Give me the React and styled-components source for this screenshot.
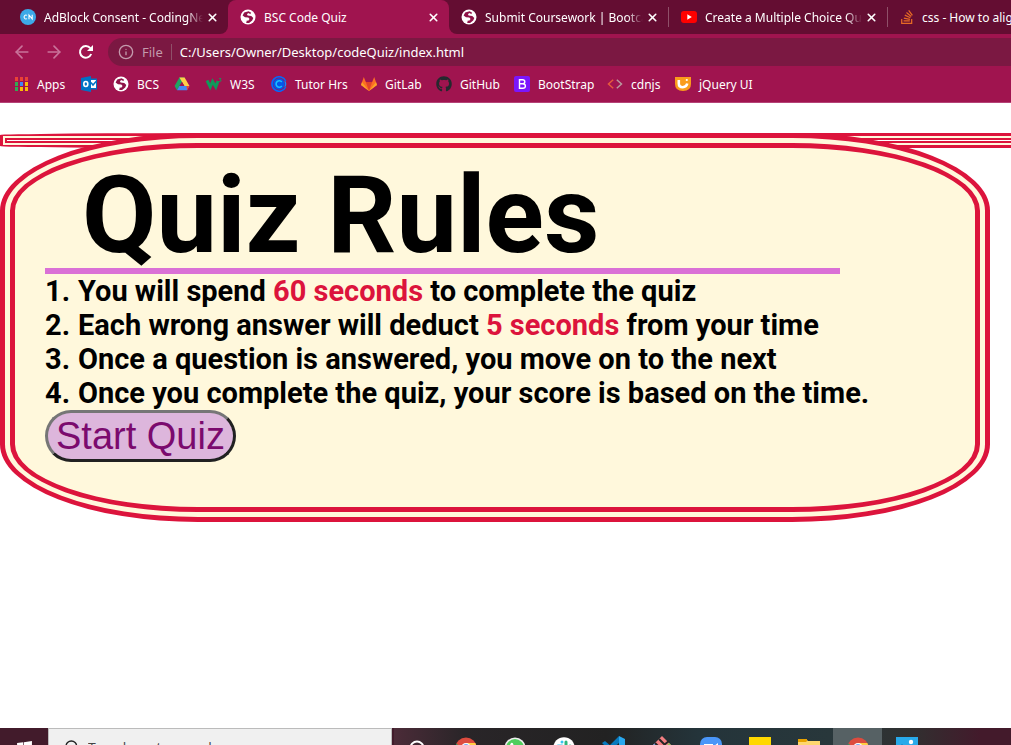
import React from "react";
import styled, { createGlobalStyle } from "styled-components";
import { X, ArrowLeft, ArrowRight, Info, Search } from "lucide-react";
import { FaGithub, FaWindows } from "react-icons/fa";
import { SiStackoverflow } from "react-icons/si";

const Global = createGlobalStyle`
  *, *::before, *::after { box-sizing: border-box; }
  html, body, #root { margin: 0; min-height: 100vh; }
  body { background: #fff; overflow: hidden; font-family: "Open Sans", "Noto Sans", sans-serif; }
`;

const Screen = styled.div`
  min-height: 100vh;
  display: flex;
  flex-direction: column;
  overflow: hidden;
`;

const Browser = styled.header`
  background: #a0144f;
  color: #fff;
  font-family: "Noto Sans", sans-serif;
  font-size: 12px;
  border-bottom: 1px solid #b54377;
  overflow: hidden;
`;

const TabStrip = styled.nav`
  display: flex;
  height: 34px;
  background: #640d32;
`;

const TabBack = styled.div`
  flex: none;
  background: ${(p) => (p.$active ? "#640d32" : "#a0144f")};
`;

const Tab = styled.div`
  width: ${(p) => p.$width}px;
  height: 34px;
  display: flex;
  align-items: center;
  padding: 0 9px 0 ${(p) => (p.$first ? 20 : 12)}px;
  background: ${(p) => (p.$active ? "#a0144f" : "#640d32")};
  border-radius: ${(p) => p.$radius || "0"};
`;

const TabLink = styled.a`
  flex: 1;
  min-width: 0;
  display: flex;
  align-items: center;
  gap: 8px;
  color: #fff;
  text-decoration: none;
`;

const TabTitle = styled.span`
  flex: 1;
  min-width: 0;
  margin-right: 2px;
  white-space: nowrap;
  overflow: hidden;
  mask-image: ${(p) => (p.$fade ? "linear-gradient(to left, transparent, #000 16px)" : "none")};
`;

const IconButton = styled.button`
  display: flex;
  align-items: center;
  justify-content: center;
  width: ${(p) => p.$size}px;
  height: ${(p) => p.$size}px;
  flex: none;
  padding: 0;
  border: 0;
  background: none;
  color: ${(p) => (p.$dim ? "#c9739a" : "#fff")};
`;

const Divider = styled.span`
  flex: none;
  align-self: center;
  width: 1px;
  height: ${(p) => p.$height}px;
  background: #8f5069;
`;

const AddressRow = styled.div`
  display: flex;
  align-items: center;
  gap: 12px;
  height: 36px;
  padding-left: 12px;
`;

const AddressBar = styled.div`
  flex: 1;
  display: flex;
  align-items: center;
  gap: 8px;
  height: 28px;
  padding-left: 10px;
  border-radius: 14px 0 0 14px;
  background: #7b1842;
  color: #c39aac;
  font-size: 13px;
`;

const AddressInput = styled.input`
  flex: 1;
  min-width: 0;
  padding: 0;
  border: 0;
  outline: 0;
  background: none;
  color: #fff;
  font: 13px "Noto Sans", sans-serif;
`;

const Bookmarks = styled.nav`
  display: flex;
  align-items: center;
  height: 32px;
  padding: 0 0 4px 13px;
`;

const Bookmark = styled.a`
  flex: 0 0 ${(p) => p.$width}px;
  display: flex;
  align-items: center;
  gap: 8px;
  color: #fff;
  text-decoration: none;
  white-space: nowrap;
`;

const Page = styled.main`
  position: relative;
  flex: 1;
  padding-top: 30px;
  overflow: hidden;
`;

const Rule = styled.hr`
  width: 120%;
  height: 15px;
  margin: 0 0 -15px;
  padding: 2px;
  border: 3px solid crimson;
  border-radius: 20% / 2px;
  background: cornsilk;

  &::before {
    content: "";
    display: block;
    height: 5px;
    border: 2px solid crimson;
    background: #fff;
  }
`;

const RulesCard = styled.section`
  position: relative;
  width: calc(100% - 21px);
  border: 15px double crimson;
  border-radius: 20%;
  background: cornsilk;
  padding: 14px 30px 45px;
`;

const Title = styled.h1`
  width: calc(100% - 105px);
  margin: 0;
  padding-left: 37px;
  border-bottom: 6px solid orchid;
  font: bold 108px/106px Roboto, "Liberation Sans", sans-serif;
  white-space: nowrap;
  color: #000;
`;

const RuleList = styled.ol`
  margin: 0;
  padding: 0;
  list-style: none;
  font: bold 29px/34px Roboto, "Liberation Sans", sans-serif;
  white-space: nowrap;
  color: #000;
`;

const RuleItem = styled.li`
  display: flex;
`;

const RuleNumber = styled.span`
  flex: 0 0 33px;
`;

const Highlight = styled.span`
  color: crimson;
`;

const StartButton = styled.button`
  display: block;
  height: 52px;
  padding: 0 8px;
  border: 3px solid;
  border-color: #767676 #212121 #212121 #767676;
  border-radius: 26px;
  background: #ddb6dc;
  color: #7b0a6e;
  font: 38px/44px "Liberation Sans", sans-serif;
`;

const Taskbar = styled.footer`
  display: flex;
  height: 17px;
  overflow: hidden;
  background: linear-gradient(90deg, #421b2b 0, #421b2b 39%, #4b2b38 39%, #292528 46%, #222 60%, #24343a 69%, #28373b 82%, #303030 90%, #431a2b 97%);
`;

const StartMenu = styled.button`
  flex: none;
  width: 48px;
  height: 40px;
  padding: 4px 0 0;
  border: 0;
  background: none;
  color: #fff;
`;

const TaskSearch = styled.label`
  flex: none;
  display: flex;
  align-items: center;
  gap: 8px;
  width: 344px;
  height: 38px;
  padding-left: 15px;
  border: 1px solid #bbb;
  background: #f0f0f0;
  color: #222;
`;

const TaskInput = styled.input`
  width: 280px;
  padding: 0;
  border: 0;
  background: none;
  font: 14px "Open Sans", sans-serif;
  &::placeholder { color: #444; opacity: 1; }
`;

const TaskButton = styled.button`
  flex: none;
  width: 49px;
  height: 40px;
  display: flex;
  align-items: center;
  justify-content: center;
  padding: 0;
  border: 0;
  background: ${(p) => (p.$active ? "#566164" : "none")};
`;

const Globe = () => (
  <svg width="16" height="16" viewBox="0 0 16 16" aria-hidden="true">
    <circle cx="8" cy="8" r="7.5" fill="#fff" />
    <path d="M8.6 2.2 4.2 3.6 2.6 6.4 5 8.2 8.3 8.4 9.6 10.1 8.2 11.8 6.8 11.4 6.2 14l2.9.1 3.1-2.5 1.1-2.5-2-2.2-3.7-.5-.7-1.5 2-.8 1.2 1.1 1.1-1.4z" fill="#8f1348" />
  </svg>
);
const CodingNepal = () => (
  <svg width="16" height="16" viewBox="0 0 16 16" aria-hidden="true">
    <circle cx="8" cy="8" r="8" fill="#3da9e8" />
    <path d="M7 6.4A1.9 1.9 0 1 0 7 9.6M9 10.2V6l3.2 4V5.8" fill="none" stroke="#fff" strokeWidth="1.1" />
  </svg>
);
const YouTube = () => (
  <svg width="16" height="16" viewBox="0 0 16 16" aria-hidden="true">
    <rect y="2" width="16" height="12" rx="3" fill="#f00" />
    <path d="m6.3 5.3 4.5 2.7-4.5 2.7z" fill="#fff" />
  </svg>
);
const Reload = () => (
  <svg width="16" height="16" viewBox="0 0 16 16" aria-hidden="true">
    <path d="M13.2 10A5.8 5.8 0 1 1 12.3 4.2" fill="none" stroke="#fff" strokeWidth="2" />
    <path d="M15 1v6H9z" fill="#fff" />
  </svg>
);
const appColors = ["#ea4335", "#ea4335", "#ea4335", "#34a853", "#4285f4", "#fbbc05", "#34a853", "#fbbc05", "#fbbc05"];
const AppsIcon = () => (
  <svg width="16" height="16" viewBox="0 0 16 16" aria-hidden="true">
    {appColors.map((c, i) => (
      <rect key={i} x={2 + (i % 3) * 5} y={1 + Math.floor(i / 3) * 5} width="3" height="4" fill={c} />
    ))}
  </svg>
);
const Outlook = () => (
  <svg width="16" height="16" viewBox="0 0 16 16" aria-hidden="true">
    <path d="M10 2.5h6v11h-6z" fill="#0072c6" />
    <path d="M10 4h5v8h-5z" fill="#fff" />
    <path d="m10 6.5 2 2.5 3.5-4" stroke="#0072c6" strokeWidth="1.5" fill="none" />
    <path d="M0 2 10 0v16L0 14z" fill="#0072c6" />
    <ellipse cx="4.8" cy="8" rx="2" ry="2.5" stroke="#fff" strokeWidth="1.6" fill="none" />
  </svg>
);
const Drive = () => (
  <svg width="16" height="16" viewBox="0 0 16 16" aria-hidden="true">
    <path d="M5.4 1.5h5.2L5.5 10 3 14.2.6 10z" fill="#1fa463" />
    <path d="M5.4 1.5h5.2L15.5 10h-5.1z" fill="#ffcf48" />
    <path d="M5.4 10h10L13 14.2H3z" fill="#4688f4" />
    <path d="M8 6 10.4 10H5.5z" fill="#a0144f" />
    <path d="M12.5 10h3L13 14.2z" fill="#ea4335" />
  </svg>
);
const W3 = () => (
  <svg width="16" height="16" viewBox="0 0 16 16" aria-hidden="true">
    <path d="M1 4.5 4.2 11l2.4-5.5L9.8 11l2.2-6" fill="none" stroke="#0f9a5a" strokeWidth="3" />
    <path d="M13 2.5h2l-1 1.2q1.5 0 1 1.3-.4.8-2 .4" fill="none" stroke="#0f9a5a" strokeWidth=".8" />
  </svg>
);
const Calendly = () => (
  <svg width="16" height="16" viewBox="0 0 16 16" aria-hidden="true">
    <path d="M14.7 5A7.2 7.2 0 1 0 14.7 11" fill="none" stroke="#006bff" strokeWidth="1.6" />
    <circle cx="8" cy="8" r="5.8" fill="#0754e8" />
    <path d="M10.8 6A3.2 3.2 0 1 0 10.8 10" fill="none" stroke="#19bfff" strokeWidth="1.6" />
    <path d="M13.8 5.2q1.8 2.8 0 5.6" fill="none" stroke="#168dff" strokeWidth="1.2" />
  </svg>
);
const GitLab = () => (
  <svg width="16" height="16" viewBox="0 0 16 16" aria-hidden="true">
    <path d="M8 15 0 9l2.8-8 2 5h6.4l2-5L16 9z" fill="#fc6d26" />
    <path d="m8 15 3.2-9H4.8z" fill="#e24329" />
    <path d="M8 15 0 9l1-3zM8 15l8-6-1-3z" fill="#fca326" />
  </svg>
);
const Bootstrap = () => (
  <svg width="16" height="16" viewBox="0 0 16 16" aria-hidden="true">
    <rect width="16" height="16" rx="2" fill="#7b16fb" />
    <path d="M5.5 3.7h3q2.3 0 2.3 2T8.5 7.8h-3zm0 4.1h3.2q2.7 0 2.7 2.2t-2.7 2.2H5.5z" fill="none" stroke="#fff" strokeWidth="1.4" />
  </svg>
);
const Cdn = () => (
  <svg width="16" height="16" viewBox="0 0 16 16" aria-hidden="true">
    <path d="M6.2 3.7 1.5 8l4.7 4.3" fill="none" stroke="#e65b3d" strokeWidth="1.5" />
    <path d="M9.8 3.7 14.5 8l-4.7 4.3" fill="none" stroke="#b99a9f" strokeWidth="1.5" />
  </svg>
);
const JQuery = () => (
  <svg width="16" height="16" viewBox="0 0 16 16" aria-hidden="true">
    <path d="M0 1h16v7q0 7-8 7T0 8z" fill="#fa9c1b" />
    <path d="M3.8 4v3.5q0 3.7 4 3.7 3.5 0 4.5-3.7" fill="none" stroke="#fff" strokeWidth="2.6" />
    <circle cx="11.8" cy="4" r="1.1" fill="#fff" />
  </svg>
);
const Chrome = () => (
  <svg width="22" height="22" viewBox="0 0 22 22" aria-hidden="true">
    <circle cx="11" cy="11" r="10.5" fill="#dd4b3e" />
    <path d="M1.5 6.5A10.5 10.5 0 0 0 11 21.5L7 12z" fill="#1aa260" />
    <path d="M11 6h9.3A10.5 10.5 0 0 1 11 21.5z" fill="#ffce44" />
    <circle cx="11" cy="11" r="5" fill="#fff" />
    <circle cx="11" cy="11" r="3.8" fill="#4587f3" />
  </svg>
);
const Cortana = () => (
  <svg width="20" height="20" viewBox="0 0 20 20" aria-hidden="true">
    <circle cx="10" cy="10" r="6.5" fill="none" stroke="#fff" strokeWidth="2" />
  </svg>
);
const WhatsApp = () => (
  <svg width="22" height="22" viewBox="0 0 22 22" aria-hidden="true">
    <circle cx="11" cy="11" r="10.5" fill="#eee" />
    <circle cx="11" cy="11" r="9" fill="#4fce5d" />
    <path d="M7 6q2-1 2.5 2L9 10q2 3 4 3l1.5-1 2 1.5q-1 3-4 2Q6 13 6 8z" fill="#fff" />
  </svg>
);
const Slack = () => (
  <svg width="22" height="22" viewBox="0 0 22 22" aria-hidden="true">
    <circle cx="11" cy="11" r="10.8" fill="#fff" />
    <g fill="none" strokeWidth="3" strokeLinecap="round">
      <path d="M9 5v.1M5 9h4" stroke="#36c5f0" />
      <path d="M13 5v4M17 9h.1" stroke="#2eb67d" />
      <path d="M13 13h4M13 17v.1" stroke="#ecb22e" />
      <path d="M9 13v4M5 13h.1" stroke="#e01e5a" />
    </g>
  </svg>
);
const VSCode = () => (
  <svg width="24" height="24" viewBox="0 0 24 24" aria-hidden="true">
    <path d="m18 0 6 3v18l-6 3z" fill="#29a8ee" />
    <path d="M18 0v7L4 19l-3-2zM18 24v-7L4 5 1 7z" fill="#0879bd" />
  </svg>
);
const GitBash = () => (
  <svg width="24" height="24" viewBox="0 0 24 24" aria-hidden="true">
    <path d="m12 0 12 12-12 12L0 12z" fill="#f27f82" />
    <path d="m0 12 5-5 6 6-6 5z" fill="#76a8e9" />
    <path d="m19 7 5 5-5 5-4-5z" fill="#8bc75b" />
    <path d="m9 3 9 9M5 7l9 9M14 9l5-4" stroke="#252525" strokeWidth="2" />
  </svg>
);
const Zoom = () => (
  <svg width="24" height="24" viewBox="0 0 24 24" aria-hidden="true">
    <rect x="1" y="1" width="22" height="22" rx="7" fill="#4a96f8" />
    <path d="M5 8h9v7H7q-2 0-2-2zm10 2 4-3v7l-4-3z" fill="#fff" />
  </svg>
);
const Notes = () => (
  <svg width="22" height="22" viewBox="0 0 22 22" aria-hidden="true">
    <path d="M0 0h22v15l-7 7H0z" fill="#ffd800" />
  </svg>
);
const Folder = () => (
  <svg width="22" height="20" viewBox="0 0 22 20" aria-hidden="true">
    <path d="M0 1h8l2 2h12v17H0z" fill="#ffd66e" />
    <path d="M0 1h9v2l-1 1H0z" fill="#e8a200" />
  </svg>
);
const Photos = () => (
  <svg width="22" height="22" viewBox="0 0 22 22" aria-hidden="true">
    <path d="M0 0h22v22H0z" fill="#28aaea" />
    <circle cx="15" cy="5" r="2.2" fill="#fff" />
    <path d="m0 13 6-6 5 5v10H0z" fill="#1279b8" />
  </svg>
);

const tabs = [
  { title: "AdBlock Consent - CodingNepal", icon: <CodingNepal />, width: 228, radius: "0 0 8px 0", fade: true, first: true },
  { title: "BSC Code Quiz", icon: <Globe />, width: 221, active: true, radius: "8px 8px 0 0" },
  { title: "Submit Coursework | Bootcamp", icon: <Globe />, width: 219, radius: "0 0 0 8px", fade: true, divider: true },
  { title: "Create a Multiple Choice Quiz App", icon: <YouTube />, width: 218, fade: true, divider: true },
  { title: "css - How to align a button", icon: <SiStackoverflow size={14} color="#e66a25" />, width: 230 },
];

const bookmarks = [
  ["Apps", <AppsIcon />, 68],
  ["", <Outlook />, 32, "Outlook"],
  ["BCS", <Globe />, 61],
  ["", <Drive />, 32, "Drive"],
  ["W3S", <W3 />, 65],
  ["Tutor Hrs", <Calendly />, 90],
  ["GitLab", <GitLab />, 75],
  ["GitHub", <FaGithub size={16} color="#24292e" />, 78],
  ["BootStrap", <Bootstrap />, 93],
  ["cdnjs", <Cdn />, 68],
  ["jQuery UI", <JQuery />, 90],
];

const rules = [
  <>You will spend <Highlight>60 seconds</Highlight> to complete the quiz</>,
  <>Each wrong answer will deduct <Highlight>5 seconds</Highlight> from your time</>,
  <>Once a question is answered, you move on to the next</>,
  <>Once you complete the quiz, your score is based on the time.</>,
];

const tasks = [
  ["Cortana", <Cortana />],
  ["Chrome", <Chrome />],
  ["WhatsApp", <WhatsApp />],
  ["Slack", <Slack />],
  ["Code editor", <VSCode />],
  ["Git", <GitBash />],
  ["Zoom", <Zoom />],
  ["Notes", <Notes />],
  ["Files", <Folder />],
  ["Chrome window", <Chrome />, true],
  ["Photos", <Photos />],
];

export default function App() {
  return (
    <Screen>
      <Global />
      <Browser>
        <TabStrip>
          {tabs.map((t) => (
            <React.Fragment key={t.title}>
              <TabBack $active={t.active}>
                <Tab $width={t.width} $active={t.active} $radius={t.radius} $first={t.first}>
                  <TabLink href="#">
                    {t.icon}
                    <TabTitle $fade={t.fade}>{t.title}</TabTitle>
                  </TabLink>
                  <IconButton $size={14} aria-label="Close tab"><X size={13} strokeWidth={3} /></IconButton>
                </Tab>
              </TabBack>
              {t.divider && <Divider $height={20} />}
            </React.Fragment>
          ))}
        </TabStrip>
        <AddressRow>
          <IconButton $size={20} $dim aria-label="Back"><ArrowLeft size={20} /></IconButton>
          <IconButton $size={20} $dim aria-label="Forward"><ArrowRight size={20} /></IconButton>
          <IconButton $size={20} aria-label="Reload"><Reload /></IconButton>
          <AddressBar>
            <Info size={16} />
            <span>File</span>
            <Divider $height={16} />
            <AddressInput aria-label="Address" defaultValue="C:/Users/Owner/Desktop/codeQuiz/index.html" />
          </AddressBar>
        </AddressRow>
        <Bookmarks>
          {bookmarks.map(([label, icon, width, name]) => (
            <Bookmark key={label || name} href="#" $width={width} aria-label={name}>
              {icon}
              {label}
            </Bookmark>
          ))}
        </Bookmarks>
      </Browser>
      <Page>
        <Rule />
        <RulesCard>
          <Title>Quiz Rules</Title>
          <RuleList>
            {rules.map((rule, i) => (
              <RuleItem key={i}>
                <RuleNumber>{i + 1}.</RuleNumber>
                <span>{rule}</span>
              </RuleItem>
            ))}
          </RuleList>
          <StartButton>Start Quiz</StartButton>
        </RulesCard>
      </Page>
      <Taskbar>
        <StartMenu aria-label="Start"><FaWindows size={17} /></StartMenu>
        <TaskSearch>
          <Search size={16} />
          <TaskInput aria-label="Search" placeholder="Type here to search" />
        </TaskSearch>
        {tasks.map(([name, icon, active]) => (
          <TaskButton key={name} aria-label={name} $active={active}>{icon}</TaskButton>
        ))}
      </Taskbar>
    </Screen>
  );
}
